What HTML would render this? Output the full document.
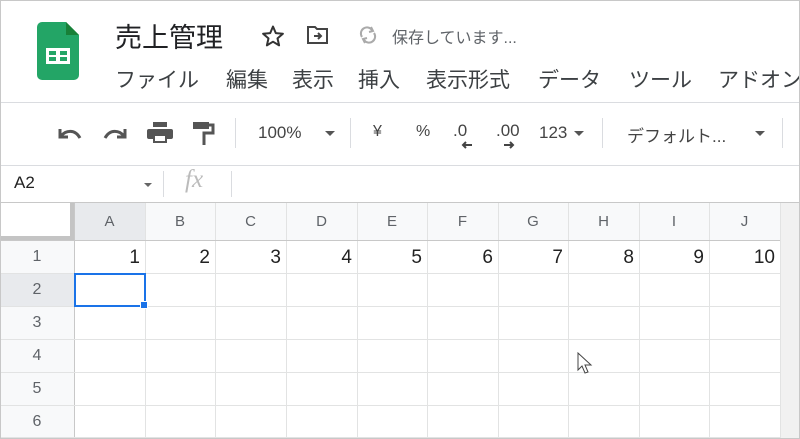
<!DOCTYPE html>
<html><head><meta charset="utf-8"><style>
*{margin:0;padding:0;box-sizing:border-box}
body{width:800px;height:439px;overflow:hidden;background:#fff;font-family:"Liberation Sans","Noto Sans CJK JP",sans-serif;position:relative;color:#3c4043}
.a{position:absolute;white-space:nowrap}
.m{position:absolute;top:64px;font-size:21px;color:#3c4043;white-space:nowrap}
.hl{position:absolute;height:1px;background:#e2e3e3}
.vl{position:absolute;width:1px;background:#e2e3e3}
.ch{position:absolute;top:203px;height:37px;line-height:37px;text-align:center;font-size:15px;color:#5f6368}
.rh{position:absolute;left:0;width:74px;text-align:center;font-size:16px;color:#5f6368;line-height:33px;height:33px}
.num{position:absolute;top:240px;height:33px;line-height:35px;text-align:right;font-size:19px;color:#222;padding-right:5px}
</style></head><body>
<div class="a" style="left:0;top:0;width:800px;height:439px;border:1px solid #c8c8c8;z-index:9;pointer-events:none"></div>
<svg class="a" style="left:37px;top:22px" width="42" height="58" viewBox="0 0 42 58">
<path d="M5 0H29L42 13V53a5 5 0 0 1-5 5H5a5 5 0 0 1-5-5V5a5 5 0 0 1 5-5z" fill="#23a566"/>
<path d="M29 0V13H42z" fill="#188038"/>
<rect x="9" y="26" width="24" height="16" fill="#fff"/>
<rect x="12" y="29" width="7" height="4" fill="#23a566"/><rect x="23" y="29" width="7" height="4" fill="#23a566"/>
<rect x="12" y="35" width="7" height="4" fill="#23a566"/><rect x="23" y="35" width="7" height="4" fill="#23a566"/>
</svg>
<div class="a" style="left:115px;top:16px;font-size:27px;color:#202124">売上管理</div>
<svg class="a" style="left:261px;top:24px" width="24" height="24" viewBox="0 0 24 24"><path d="M12 2.5l2.8 6.6 7.1.6-5.4 4.7 1.6 7-6.1-3.7-6.1 3.7 1.6-7-5.4-4.7 7.1-.6z" fill="none" stroke="#333" stroke-width="2" stroke-linejoin="round"/></svg>
<svg class="a" style="left:306px;top:24px" width="24" height="22" viewBox="0 0 24 22"><path d="M2 3h7l2 2h10v14H2z" fill="none" stroke="#444" stroke-width="2"/><path d="M8 12h7M12 9l3 3-3 3" fill="none" stroke="#444" stroke-width="2"/></svg>
<svg class="a" style="left:357px;top:25px" width="22" height="20" viewBox="0 0 22 20"><path d="M5 12a6 6 0 0 1 10-7M17 8a6 6 0 0 1-10 7" fill="none" stroke="#aaa" stroke-width="2"/><path d="M14 2l2 4-4 1M8 18l-2-4 4-1" fill="none" stroke="#aaa" stroke-width="2"/></svg>
<div class="a" style="left:392px;top:24px;font-size:16px;color:#5f6368">保存しています...</div>
<div class="m" style="left:115px">ファイル</div>
<div class="m" style="left:226px">編集</div>
<div class="m" style="left:292px">表示</div>
<div class="m" style="left:358px">挿入</div>
<div class="m" style="left:426px">表示形式</div>
<div class="m" style="left:538px">データ</div>
<div class="m" style="left:629px">ツール</div>
<div class="m" style="left:718px">アドオン</div>
<div class="hl" style="left:0;top:102px;width:800px;background:#dadce0"></div>
<!-- toolbar -->
<svg class="a" style="left:56px;top:122px" width="28" height="24" viewBox="0 0 28 24"><path d="M4 7v8h8" fill="none" stroke="#555" stroke-width="3"/><path d="M5 14c5-6 14-7 19 2" fill="none" stroke="#555" stroke-width="3"/></svg>
<svg class="a" style="left:101px;top:122px" width="28" height="24" viewBox="0 0 28 24"><path d="M24 7v8h-8" fill="none" stroke="#555" stroke-width="3"/><path d="M23 14c-5-6-14-7-19 2" fill="none" stroke="#555" stroke-width="3"/></svg>
<svg class="a" style="left:146px;top:121px" width="28" height="26" viewBox="0 0 28 26"><rect x="7" y="1" width="14" height="5" fill="#555"/><rect x="1" y="8" width="26" height="10" rx="2" fill="#555"/><rect x="7" y="13" width="14" height="9" fill="#555"/><rect x="9" y="15" width="10" height="5" fill="#fff"/></svg>
<svg class="a" style="left:192px;top:121px" width="24" height="26" viewBox="0 0 24 26"><rect x="1" y="1" width="16" height="7" fill="#555"/><path d="M17 4h4v8h-9v12" fill="none" stroke="#555" stroke-width="3"/></svg>
<div class="a" style="left:235px;top:118px;width:1px;height:30px;background:#dadce0"></div>
<div class="a" style="left:258px;top:123px;font-size:17px;color:#444">100%</div>
<div class="a" style="left:325px;top:131px;border:5px solid transparent;border-top:5px solid #555"></div>
<div class="a" style="left:350px;top:118px;width:1px;height:30px;background:#dadce0"></div>
<div class="a" style="left:373px;top:123px;font-size:16px;color:#444">¥</div>
<div class="a" style="left:416px;top:123px;font-size:16px;color:#444">%</div>
<div class="a" style="left:453px;top:121px;font-size:17px;color:#444">.0</div>
<div class="a" style="left:496px;top:121px;font-size:17px;color:#444">.00</div>
<svg class="a" style="left:460px;top:140px" width="70" height="10" viewBox="0 0 70 10"><path d="M3 5h9M6 2L3 5l3 3" fill="none" stroke="#444" stroke-width="2"/><path d="M53 5h-9M50 2l3 3-3 3" fill="none" stroke="#444" stroke-width="2"/></svg>
<div class="a" style="left:539px;top:123px;font-size:17px;color:#444">123</div>
<div class="a" style="left:574px;top:131px;border:5px solid transparent;border-top:5px solid #555"></div>
<div class="a" style="left:602px;top:118px;width:1px;height:30px;background:#dadce0"></div>
<div class="a" style="left:627px;top:122px;font-size:17px;color:#444">デフォルト...</div>
<div class="a" style="left:755px;top:131px;border:5px solid transparent;border-top:5px solid #555"></div>
<div class="a" style="left:782px;top:118px;width:1px;height:30px;background:#dadce0"></div>
<div class="hl" style="left:0;top:165px;width:800px;background:#dadce0"></div>
<div class="a" style="left:14px;top:173px;font-size:17px;color:#222">A2</div>
<div class="a" style="left:144px;top:183px;border:4px solid transparent;border-top:4px solid #666"></div>
<div class="a" style="left:163px;top:171px;width:1px;height:26px;background:#dadce0"></div>
<div class="a" style="left:185px;top:166px;font-size:25px;color:#bbb;font-style:italic;font-family:'Liberation Serif',serif">fx</div>
<div class="a" style="left:231px;top:171px;width:1px;height:26px;background:#dadce0"></div>
<div class="hl" style="left:0;top:202px;width:800px;background:#c8c8c8"></div>
<div class="a" style="left:0;top:203px;width:780px;height:37px;background:#f8f9fa"></div>
<div class="a" style="left:0;top:240px;width:74px;height:198px;background:#f8f9fa"></div>
<div class="a" style="left:74px;top:203px;width:71px;height:37px;background:#e8eaed"></div>
<div class="a" style="left:0;top:273px;width:74px;height:33px;background:#e8eaed"></div>
<div class="a" style="left:780px;top:203px;width:20px;height:236px;background:#f1f1f1"></div>
<div class="a" style="left:0;top:203px;width:74px;height:37px;background:#fff"></div>
<div class="a" style="left:70px;top:203px;width:4px;height:37px;background:#c4c4c4"></div>
<div class="a" style="left:0;top:236px;width:74px;height:4px;background:#c4c4c4"></div>
<div class="vl" style="left:74px;top:203px;height:236px;background:#c8c8c8"></div>
<div class="vl" style="left:145px;top:203px;height:236px"></div>
<div class="vl" style="left:215px;top:203px;height:236px"></div>
<div class="vl" style="left:286px;top:203px;height:236px"></div>
<div class="vl" style="left:357px;top:203px;height:236px"></div>
<div class="vl" style="left:427px;top:203px;height:236px"></div>
<div class="vl" style="left:498px;top:203px;height:236px"></div>
<div class="vl" style="left:568px;top:203px;height:236px"></div>
<div class="vl" style="left:639px;top:203px;height:236px"></div>
<div class="vl" style="left:709px;top:203px;height:236px"></div>
<div class="vl" style="left:780px;top:203px;height:236px"></div>
<div class="hl" style="left:0;top:240px;width:780px;background:#c8c8c8"></div>
<div class="hl" style="left:0;top:273px;width:780px"></div>
<div class="hl" style="left:0;top:306px;width:780px"></div>
<div class="hl" style="left:0;top:339px;width:780px"></div>
<div class="hl" style="left:0;top:372px;width:780px"></div>
<div class="hl" style="left:0;top:405px;width:780px"></div>
<div class="hl" style="left:0;top:437px;width:780px"></div>
<div class="ch" style="left:74px;width:71px">A</div><div class="ch" style="left:145px;width:70px">B</div><div class="ch" style="left:215px;width:71px">C</div><div class="ch" style="left:286px;width:71px">D</div><div class="ch" style="left:357px;width:70px">E</div><div class="ch" style="left:427px;width:71px">F</div><div class="ch" style="left:498px;width:70px">G</div><div class="ch" style="left:568px;width:71px">H</div><div class="ch" style="left:639px;width:70px">I</div><div class="ch" style="left:709px;width:71px">J</div>
<div class="rh" style="top:240px">1</div><div class="rh" style="top:273px">2</div><div class="rh" style="top:306px">3</div><div class="rh" style="top:339px">4</div><div class="rh" style="top:372px">5</div><div class="rh" style="top:405px">6</div>
<div class="num" style="left:74px;width:71px">1</div><div class="num" style="left:145px;width:70px">2</div><div class="num" style="left:215px;width:71px">3</div><div class="num" style="left:286px;width:71px">4</div><div class="num" style="left:357px;width:70px">5</div><div class="num" style="left:427px;width:71px">6</div><div class="num" style="left:498px;width:70px">7</div><div class="num" style="left:568px;width:71px">8</div><div class="num" style="left:639px;width:70px">9</div><div class="num" style="left:709px;width:71px">10</div>
<div class="a" style="left:74px;top:273px;width:72px;height:34px;border:2px solid #1a73e8"></div>
<div class="a" style="left:140px;top:301px;width:8px;height:8px;background:#1a73e8;border:1px solid #fff"></div>
<svg class="a" style="left:577px;top:352px" width="18" height="24" viewBox="0 0 18 24"><path d="M1 1v17l4-4 3 7 3-1-3-7h6z" fill="#fff" stroke="#444" stroke-width="1"/></svg>
</body></html>
